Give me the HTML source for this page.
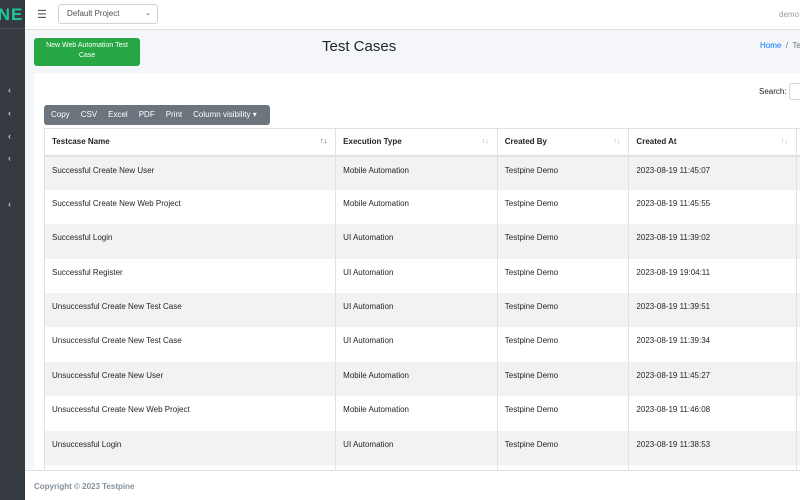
<!DOCTYPE html>
<html><head><meta charset="utf-8"><style>
*{box-sizing:border-box;margin:0;padding:0}
body{width:800px;height:500px;overflow:hidden;font-family:"Liberation Sans",sans-serif;background:#f4f6f9;position:relative;font-size:8px;color:#212529}
.side{position:absolute;left:0;top:0;width:25px;height:500px;background:#343a40}
.logo{position:absolute;left:0;top:3px;width:25px;height:26px;border-bottom:1px solid #4b545c;color:#20c997;font-weight:bold;font-size:17px;line-height:24px;overflow:hidden;white-space:nowrap;text-indent:-8px;letter-spacing:1px}
.chev{position:absolute;left:8px;color:#c2c7d0;font-size:9px;font-weight:bold}
.hdr{position:absolute;left:25px;top:0;right:0;height:30px;background:#fff;border-bottom:1px solid #dee2e6}
.sel{position:absolute;left:33px;top:4px;width:100px;height:20px;border:1px solid #ced4da;border-radius:3px;font-size:8px;line-height:18px;padding-left:8px;color:#495057}
.card{position:absolute;left:34px;top:73px;right:0;height:397px;background:#fff}
.btn{position:absolute;left:34px;top:38px;width:106px;height:28px;background:#28a745;border-radius:3px;color:#fff;font-size:7px;text-align:center;line-height:10px;padding-top:3px}
h1{position:absolute;left:322px;top:38px;font-weight:normal;font-size:15px;color:#212529}
.bc{position:absolute;left:760px;top:41px;font-size:8px;color:#6c757d;white-space:nowrap}
.bc span{color:#007bff}
.dtb{position:absolute;left:44px;top:105px;width:226px;height:20px;background:#6c757d;border-radius:3px;color:#fff;font-size:8px;line-height:20px;white-space:nowrap}
.dtb span{margin-left:7px;margin-right:4px}
table{position:absolute;left:44px;top:128px;width:760px;border-collapse:collapse;font-size:8px}
td,th{border-left:1px solid #dee2e6;padding-left:7px;text-align:left;height:34.4px;vertical-align:top;padding-top:9px}
th{height:27px;font-weight:bold;border-top:1px solid #dee2e6;border-bottom:2px solid #dee2e6;position:relative;vertical-align:middle;padding-top:0}
th i{position:absolute;right:8px;top:9px;font-style:normal;color:#aaa;font-size:7px}
tr:nth-child(even) td{background:#f2f2f2}
.foot{position:absolute;left:25px;top:470px;right:0;height:30px;background:#fff;border-top:1px solid #dee2e6;font-size:8px;font-weight:bold;color:#869099;padding:11px 0 0 9px}
</style></head><body>
<div class="side"><div class="logo">INE</div>
<div class="chev" style="top:85px">‹</div><div class="chev" style="top:108px">‹</div><div class="chev" style="top:131px">‹</div><div class="chev" style="top:153px">‹</div><div class="chev" style="top:199px">‹</div></div>
<div class="hdr"><span style="position:absolute;left:12px;top:8px;font-size:11px;color:#555">☰</span><div class="sel">Default Project<span style="position:absolute;right:6px;font-size:7px">⌄</span></div><span style="position:absolute;left:754px;top:10px;color:#999;font-size:8px">demo</span></div>
<div class="btn">New Web Automation Test<br>Case</div>
<h1>Test Cases</h1>
<div class="bc"><span>Home</span> &nbsp;/ &nbsp;Te</div>
<div class="card"></div>
<div style="position:absolute;left:759px;top:87px;font-size:8px">Search:</div>
<div style="position:absolute;left:789px;top:83px;width:20px;height:17px;border:1px solid #ced4da;border-radius:3px;background:#fff"></div>
<div class="dtb"><span>Copy</span><span>CSV</span><span>Excel</span><span>PDF</span><span>Print</span><span>Column visibility ▾</span></div>
<table>
<tr><th style="width:292px">Testcase Name<i style="color:#333">↑↓</i></th><th style="width:162px">Execution Type<i>↑↓</i></th><th style="width:132px">Created By<i>↑↓</i></th><th style="width:168px">Created At<i>↑↓</i></th><th></th></tr>
<tr><td>Successful Create New User</td><td>Mobile Automation</td><td>Testpine Demo</td><td>2023-08-19 11:45:07</td><td></td></tr>
<tr><td>Successful Create New Web Project</td><td>Mobile Automation</td><td>Testpine Demo</td><td>2023-08-19 11:45:55</td><td></td></tr>
<tr><td>Successful Login</td><td>UI Automation</td><td>Testpine Demo</td><td>2023-08-19 11:39:02</td><td></td></tr>
<tr><td>Successful Register</td><td>UI Automation</td><td>Testpine Demo</td><td>2023-08-19 19:04:11</td><td></td></tr>
<tr><td>Unsuccessful Create New Test Case</td><td>UI Automation</td><td>Testpine Demo</td><td>2023-08-19 11:39:51</td><td></td></tr>
<tr><td>Unsuccessful Create New Test Case</td><td>UI Automation</td><td>Testpine Demo</td><td>2023-08-19 11:39:34</td><td></td></tr>
<tr><td>Unsuccessful Create New User</td><td>Mobile Automation</td><td>Testpine Demo</td><td>2023-08-19 11:45:27</td><td></td></tr>
<tr><td>Unsuccessful Create New Web Project</td><td>Mobile Automation</td><td>Testpine Demo</td><td>2023-08-19 11:46:08</td><td></td></tr>
<tr><td>Unsuccessful Login</td><td>UI Automation</td><td>Testpine Demo</td><td>2023-08-19 11:38:53</td><td></td></tr>
<tr><td></td><td></td><td></td><td></td><td></td></tr>
</table>
<div class="foot">Copyright © 2023 Testpine</div>
</body></html>
